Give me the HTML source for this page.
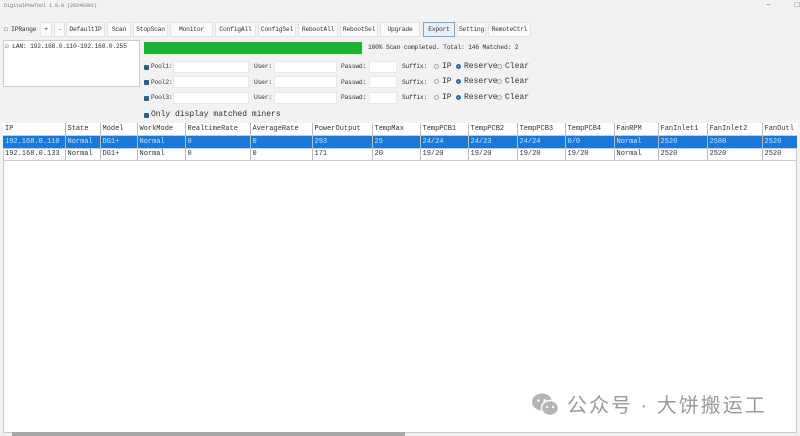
<html><head><style>
body{margin:0;width:800px;height:436px;background:#f2f2f2;font-family:"Liberation Mono",monospace;font-size:7.5px;color:#333;position:relative;overflow:hidden}
.a{position:absolute;white-space:nowrap}
.b{position:absolute;top:22px;height:15px;background:#fbfbfb;border:1px solid #e4e4e4;box-sizing:border-box;text-align:center;line-height:13px;font-size:6.3px;letter-spacing:-0.2px}
.in{position:absolute;height:12px;background:#fff;border:1px solid #e8e8e8;box-sizing:border-box}
.cb{position:absolute;width:5px;height:5px;background:#2d5f8c;border-radius:1px}
.r{position:absolute;width:5px;height:5px;border:1px solid #aaa;border-radius:50%;box-sizing:border-box}
.rs{border:2px solid #2d6aa0}
.l{font-size:6.3px;letter-spacing:-0.2px}
table{position:absolute;left:3px;top:123px;border-collapse:collapse;font-size:7px;table-layout:fixed}
td{height:12.5px;padding:0 0 0 2px;white-space:nowrap;overflow:hidden;border-right:1px solid #bbb;border-bottom:1px solid #ccc}
</style></head><body>
<div class="a" style="left:4px;top:3px;font-size:5px;color:#777">DigitalPowTool 1.0.0 (20240301)</div>
<div class="a" style="left:766px;top:1px;color:#666;font-size:8px">–&nbsp;&nbsp;&nbsp;&nbsp;&nbsp;□</div>
<div class="a l" style="left:4px;top:26px">☐ IPRange</div>
<div class="b" style="left:40px;width:12px">+</div>
<div class="b" style="left:54px;width:11px">-</div>
<div class="b" style="left:66px;width:39px">DefaultIP</div>
<div class="b" style="left:107px;width:24px">Scan</div>
<div class="b" style="left:133px;width:35px">StopScan</div>
<div class="b" style="left:170px;width:43px">Monitor</div>
<div class="b" style="left:215px;width:41px">ConfigAll</div>
<div class="b" style="left:258px;width:38px">ConfigSel</div>
<div class="b" style="left:298px;width:40px">RebootAll</div>
<div class="b" style="left:340px;width:38px">RebootSel</div>
<div class="b" style="left:380px;width:40px">Upgrade</div>
<div class="b" style="left:423px;width:32px;border-color:#7aa6d0;background:#e8f0f8">Export</div>
<div class="b" style="left:457px;width:29px">Setting</div>
<div class="b" style="left:488px;width:43px">RemoteCtrl</div>
<div class="a" style="left:3px;top:40px;width:137px;height:47px;background:#fff;border:1px solid #ccc;box-sizing:border-box"></div>
<div class="a l" style="left:5px;top:43px">☑ LAN: 192.168.0.110-192.168.0.255</div>
<div class="a" style="left:144px;top:42px;width:218px;height:12px;background:#1db230"></div>
<div class="a l" style="left:368px;top:44px">100% Scan completed. Total: 146 Matched: 2</div>
<div class="cb" style="left:144px;top:65px"></div><div class="a l" style="left:151px;top:63px">Pool1:</div>
<div class="in" style="left:173px;top:61px;width:76px"></div><div class="a l" style="left:254px;top:63px">User:</div>
<div class="in" style="left:274px;top:61px;width:63px"></div><div class="a l" style="left:341px;top:63px">Passwd:</div>
<div class="in" style="left:369px;top:61px;width:28px"></div><div class="a l" style="left:402px;top:63px">Suffix:</div>
<div class="cb" style="left:144px;top:80px"></div><div class="a l" style="left:151px;top:79px">Pool2:</div>
<div class="in" style="left:173px;top:76px;width:76px"></div><div class="a l" style="left:254px;top:79px">User:</div>
<div class="in" style="left:274px;top:76px;width:63px"></div><div class="a l" style="left:341px;top:79px">Passwd:</div>
<div class="in" style="left:369px;top:76px;width:28px"></div><div class="a l" style="left:402px;top:79px">Suffix:</div>
<div class="cb" style="left:144px;top:96px"></div><div class="a l" style="left:151px;top:94px">Pool3:</div>
<div class="in" style="left:173px;top:92px;width:76px"></div><div class="a l" style="left:254px;top:94px">User:</div>
<div class="in" style="left:274px;top:92px;width:63px"></div><div class="a l" style="left:341px;top:94px">Passwd:</div>
<div class="in" style="left:369px;top:92px;width:28px"></div><div class="a l" style="left:402px;top:94px">Suffix:</div>
<div class="r" style="left:434px;top:64px"></div><div class="a" style="left:442px;top:62px;font-size:8px">IP</div><div class="r rs" style="left:456px;top:64px"></div><div class="a" style="left:464px;top:62px;font-size:8px">Reserve</div><div class="r" style="left:497px;top:64px"></div><div class="a" style="left:505px;top:62px;font-size:8px">Clear</div>
<div class="r" style="left:434px;top:79px"></div><div class="a" style="left:442px;top:77px;font-size:8px">IP</div><div class="r rs" style="left:456px;top:79px"></div><div class="a" style="left:464px;top:77px;font-size:8px">Reserve</div><div class="r" style="left:497px;top:79px"></div><div class="a" style="left:505px;top:77px;font-size:8px">Clear</div>
<div class="r" style="left:434px;top:95px"></div><div class="a" style="left:442px;top:93px;font-size:8px">IP</div><div class="r rs" style="left:456px;top:95px"></div><div class="a" style="left:464px;top:93px;font-size:8px">Reserve</div><div class="r" style="left:497px;top:95px"></div><div class="a" style="left:505px;top:93px;font-size:8px">Clear</div>
<div class="cb" style="left:144px;top:113px"></div><div class="a" style="left:151px;top:110px;font-size:8px">Only display matched miners</div>
<div class="a" style="left:3px;top:123px;width:794px;height:310px;background:#fff;border:1px solid #ccc;box-sizing:border-box"></div>
<table style="width:794px">
<colgroup><col style="width:62px"><col style="width:35px"><col style="width:37px"><col style="width:48px"><col style="width:65px"><col style="width:62px"><col style="width:60px"><col style="width:48px"><col style="width:48px"><col style="width:49px"><col style="width:48px"><col style="width:49px"><col style="width:44px"><col style="width:49px"><col style="width:55px"><col style="width:35px"></colgroup>
<tr style="background:#fff"><td>IP</td><td>State</td><td>Model</td><td>WorkMode</td><td>RealtimeRate</td><td>AverageRate</td><td>PowerOutput</td><td>TempMax</td><td>TempPCB1</td><td>TempPCB2</td><td>TempPCB3</td><td>TempPCB4</td><td>FanRPM</td><td>FanInlet1</td><td>FanInlet2</td><td style="border-right:0">FanOutl</td></tr>
<tr style="background:#1a78d6;color:#cfe3f8"><td>192.168.0.110</td><td>Normal</td><td>DG1+</td><td>Normal</td><td>0</td><td>0</td><td>293</td><td>25</td><td>24/24</td><td>24/23</td><td>24/24</td><td>0/0</td><td>Normal</td><td>2520</td><td>2580</td><td style="border-right:0">2520</td></tr>
<tr><td>192.168.0.133</td><td>Normal</td><td>DG1+</td><td>Normal</td><td>0</td><td>0</td><td>171</td><td>20</td><td>19/20</td><td>19/20</td><td>19/20</td><td>19/20</td><td>Normal</td><td>2520</td><td>2520</td><td style="border-right:0">2520</td></tr>
</table>
<div class="a" style="left:12px;top:432px;width:393px;height:4px;background:#a8a8a8"></div>
<div class="a" style="left:530px;top:393px;width:32px;height:24px">
<svg width="32" height="24"><ellipse cx="12" cy="9" rx="10" ry="8.5" fill="#b5b5b5"/><ellipse cx="20" cy="15" rx="8.5" ry="7.5" fill="#b5b5b5" stroke="#fff" stroke-width="1.4"/><circle cx="8.5" cy="7.5" r="1.3" fill="#fff"/><circle cx="14.5" cy="7.5" r="1.3" fill="#fff"/><circle cx="17" cy="14" r="1.1" fill="#fff"/><circle cx="23" cy="14" r="1.1" fill="#fff"/></svg></div>
<div class="a" style="left:567px;top:389px;font-family:'Liberation Sans','Noto Sans CJK SC',sans-serif;font-size:20px;letter-spacing:2px;color:#9a9a9a">公众号 · 大饼搬运工</div>
</body></html>
